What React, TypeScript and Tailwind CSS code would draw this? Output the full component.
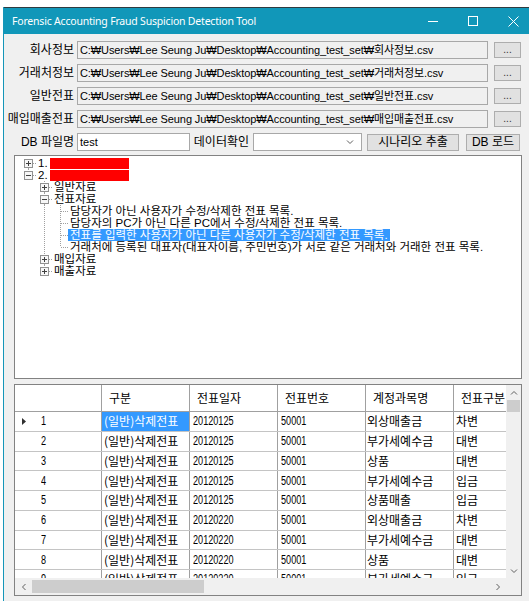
import React from 'react';

const paths = [
  { label: '회사정보', file: '회사정보.csv' },
  { label: '거래처정보', file: '거래처정보.csv' },
  { label: '일반전표', file: '일반전표.csv' },
  { label: '매입매출전표', file: '매입매출전표.csv' },
];

const base = 'C:₩Users₩Lee Seung Ju₩Desktop₩Accounting_test_set₩';

type Seg = { box?: '+' | '-'; up?: boolean; down?: boolean; right?: boolean } | 'pipe' | null;

const tree: { gut: Seg[]; label: string; red?: boolean; selected?: boolean }[] = [
  { gut: [{ box: '+', right: true, down: true }], label: '1.', red: true },
  { gut: [{ box: '-', right: true, up: true }], label: '2.', red: true },
  { gut: [null, { box: '+', up: true, down: true, right: true }], label: '일반자료' },
  { gut: [null, { box: '-', up: true, down: true, right: true }], label: '전표자료' },
  { gut: [null, 'pipe', { up: true, down: true, right: true }], label: '담당자가 아닌 사용자가 수정/삭제한 전표 목록.' },
  { gut: [null, 'pipe', { up: true, down: true, right: true }], label: '담당자의 PC가 아닌 다른 PC에서 수정/삭제한 전표 목록.' },
  { gut: [null, 'pipe', { up: true, down: true, right: true }], label: '전표를 입력한 사용자가 아닌 다른 사용자가 수정/삭제한 전표 목록.', selected: true },
  { gut: [null, 'pipe', { up: true, right: true }], label: '거래처에 등록된 대표자(대표자이름, 주민번호)가 서로 같은 거래처와 거래한 전표 목록.' },
  { gut: [null, { box: '+', up: true, down: true, right: true }], label: '매입자료' },
  { gut: [null, { box: '+', up: true, right: true }], label: '매출자료' },
];

const columns = ['구분', '전표일자', '전표번호', '계정과목명', '전표구분'];

const rows = [
  ['20120125', '외상매출금', '차변'],
  ['20120125', '부가세예수금', '대변'],
  ['20120125', '상품', '대변'],
  ['20120125', '부가세예수금', '입금'],
  ['20120125', '상품매출', '입금'],
  ['20120220', '외상매출금', '차변'],
  ['20120220', '부가세예수금', '대변'],
  ['20120220', '상품', '대변'],
  ['20120220', '부가세예수금', '입금'],
];

function Gutter({ seg }: { seg: Seg }) {
  const dot = { stroke: '#a0a0a0', strokeDasharray: '1 1', strokeWidth: 1 };
  return (
    <svg width="16" height="12" className="shrink-0">
      {seg === 'pipe' && <line x1="8.5" y1="0" x2="8.5" y2="12" {...dot} />}
      {seg && seg !== 'pipe' && (
        <>
          {seg.up && <line x1="8.5" y1="0" x2="8.5" y2={seg.box ? 2 : 6} {...dot} />}
          {seg.down && <line x1="8.5" y1={seg.box ? 11 : 6} x2="8.5" y2="12" {...dot} />}
          {seg.right && <line x1={seg.box ? 13 : 9} y1="6.5" x2="16" y2="6.5" {...dot} />}
          {seg.box && (
            <>
              <rect x="4.5" y="2.5" width="8" height="8" fill="#f7f7f7" stroke="#919191" />
              <line x1="6" y1="6.5" x2="11" y2="6.5" stroke="#404040" />
              {seg.box === '+' && <line x1="8.5" y1="4" x2="8.5" y2="9" stroke="#404040" />}
            </>
          )}
        </>
      )}
    </svg>
  );
}

function Chevron({ dir }: { dir: 'up' | 'down' | 'left' | 'right' }) {
  const d = {
    up: 'M1 4.5 L4 1.5 L7 4.5',
    down: 'M1 1.5 L4 4.5 L7 1.5',
    left: 'M4.5 1 L1.5 4 L4.5 7',
    right: 'M1.5 1 L4.5 4 L1.5 7',
  }[dir];
  const wide = dir === 'up' || dir === 'down';
  return (
    <svg width={wide ? 8 : 6} height={wide ? 6 : 8}>
      <path d={d} fill="none" stroke="#606060" strokeWidth="1" />
    </svg>
  );
}

// narrow digits, like the grid's bitmap font
function Num({ children }: { children: React.ReactNode }) {
  return <span className="inline-block origin-left scale-x-[0.76] font-['Liberation_Sans',sans-serif]">{children}</span>;
}

export default function App() {
  return (
    <div className="h-[601px] w-[529px] overflow-hidden bg-white pl-[3px] pt-[7px] font-['Liberation_Sans','Noto_Sans_CJK_KR',sans-serif] text-[12px] leading-[12px] text-black">
      <div className="flex h-[600px] w-[530px] flex-col border-l border-[#1596b9] bg-[#f0f0f0]">
        {/* title bar */}
        <div className="flex h-[27px] shrink-0 items-center border-t border-[#2f3b40] bg-[#1197b9] text-white">
          <span className="pl-[8px] font-['Noto_Sans',sans-serif] text-[10.5px] leading-[14px] tracking-[-0.2px]">
            Forensic Accounting Fraud Suspicion Detection Tool
          </span>
          <div className="ml-auto flex h-full">
            <div className="flex w-[40px] items-center justify-center">
              <div className="h-px w-[10px] bg-white" />
            </div>
            <div className="flex w-[40px] items-center justify-center">
              <div className="h-[10px] w-[10px] border border-white" />
            </div>
            <div className="flex w-[40px] items-center justify-center">
              <svg width="11" height="11">
                <path d="M0.5 0.5 L10.5 10.5 M10.5 0.5 L0.5 10.5" stroke="white" strokeWidth="1" />
              </svg>
            </div>
          </div>
        </div>

        {/* file paths */}
        <div className="flex flex-col gap-[5px] pt-[7px]">
          {paths.map((p) => (
            <div key={p.label} className="flex h-[18px] items-center">
              <span className="w-[71px] pr-[1px] text-right">{p.label}</span>
              <div className="ml-[2px] flex h-[18px] w-[411px] items-center whitespace-nowrap border border-[#a8a8a8] bg-[#f0f0f0] pl-[2px] text-[11px] tracking-[-0.1px]">
                {base}
                {p.file}
              </div>
              <button className="ml-[6px] flex h-[16px] w-[27px] items-end justify-center border border-[#adadad] bg-[#e1e1e1] pb-[3px] text-[10px] leading-[8px] text-[#303030]">
                ...
              </button>
            </div>
          ))}

          <div className="flex h-[18px] items-center">
            <span className="w-[71px] pr-[1px] text-right">DB 파일명</span>
            <div className="ml-[2px] flex h-[18px] w-[113px] items-center border border-[#a8a8a8] bg-white pl-[2px] text-[11px]">test</div>
            <span className="w-[63px] pr-[4px] text-right">데이터확인</span>
            <div className="flex h-[18px] w-[109px] items-center justify-end border border-[#a8a8a8] bg-white pr-[7px]">
              <Chevron dir="down" />
            </div>
            <button className="ml-[5px] h-[17px] w-[92px] border border-[#adadad] bg-[#e1e1e1]">시나리오 추출</button>
            <button className="ml-[7px] h-[17px] w-[54px] border border-[#adadad] bg-[#e1e1e1]">DB 로드</button>
          </div>
        </div>

        {/* tree view */}
        <div className="ml-[10px] mt-[4px] h-[224px] w-[508px] shrink-0 border border-[#828282] bg-white pl-[5px] pt-[1px] text-[11.5px]">
          {tree.map((n, i) => (
            <div key={i} className="flex h-[12px] items-center whitespace-nowrap">
              {n.gut.map((g, j) => (
                <Gutter key={j} seg={g} />
              ))}
              <span className={`px-[2px] leading-[12px] ${n.selected ? 'bg-[#3399ff] text-white' : ''}`}>{n.label}</span>
              {n.red && <div className="h-[11px] w-[79px] bg-[#ff0000]" />}
            </div>
          ))}
        </div>

        {/* data grid */}
        <div className="ml-[10px] mt-[5px] flex h-[212px] w-[508px] shrink-0 flex-col border border-[#828282] bg-[#f0f0f0] font-['Noto_Sans_CJK_KR',sans-serif]">
          <div className="flex min-h-0 flex-1">
            <div className="w-[491px] overflow-hidden bg-white">
              <div className="flex h-[27px] w-[541px] border-b border-[#a0a0a0]">
                <div className="w-[87px] shrink-0 border-r border-[#a0a0a0]" />
                {columns.map((c) => (
                  <div key={c} className="flex w-[88px] shrink-0 items-center border-r border-[#a0a0a0] pl-[7px]">
                    {c}
                  </div>
                ))}
              </div>
              {rows.map((r, i) => (
                <div key={i} className="flex h-[19.75px] w-[541px] border-b border-[#c4c4c4]">
                  <div className="flex w-[87px] shrink-0 items-center border-r border-[#a0a0a0]">
                    <span className="flex w-[26px] pl-[7px]">
                      {i === 0 && (
                        <svg width="4" height="7">
                          <path d="M0 0 L4 3.5 L0 7 Z" fill="#303030" />
                        </svg>
                      )}
                    </span>
                    <Num>{i + 1}</Num>
                  </div>
                  <div
                    className={`flex w-[88px] shrink-0 items-center border-r border-[#a0a0a0] pl-[2px] ${
                      i === 0 ? 'bg-[#3399ff] text-white' : ''
                    }`}
                  >
                    (일반)삭제전표
                  </div>
                  <div className="flex w-[88px] shrink-0 items-center border-r border-[#a0a0a0] pl-[3px]">
                    <Num>{r[0]}</Num>
                  </div>
                  <div className="flex w-[88px] shrink-0 items-center border-r border-[#a0a0a0] pl-[3px]">
                    <Num>50001</Num>
                  </div>
                  <div className="flex w-[88px] shrink-0 items-center border-r border-[#a0a0a0] pl-[1px]">{r[1]}</div>
                  <div className="flex w-[88px] shrink-0 items-center border-r border-[#a0a0a0] pl-[2px]">{r[2]}</div>
                </div>
              ))}
            </div>
            {/* vertical scrollbar */}
            <div className="flex w-[15px] flex-col bg-[#f0f0f0]">
              <div className="flex h-[15px] items-center justify-center">
                <Chevron dir="up" />
              </div>
              <div className="mx-[1px] h-[12px] bg-[#cdcdcd]" />
              <div className="mt-auto flex h-[15px] items-center justify-center">
                <Chevron dir="down" />
              </div>
            </div>
          </div>
          {/* horizontal scrollbar */}
          <div className="flex h-[17px] shrink-0">
            <div className="flex w-[491px] items-center bg-[#f0f0f0]">
              <div className="flex w-[17px] justify-center">
                <Chevron dir="left" />
              </div>
              <div className="h-[13px] w-[172px] bg-[#cdcdcd]" />
              <div className="ml-auto flex w-[17px] justify-center">
                <Chevron dir="right" />
              </div>
            </div>
            <div className="w-[15px] bg-[#f0f0f0]" />
          </div>
        </div>
      </div>
    </div>
  );
}
